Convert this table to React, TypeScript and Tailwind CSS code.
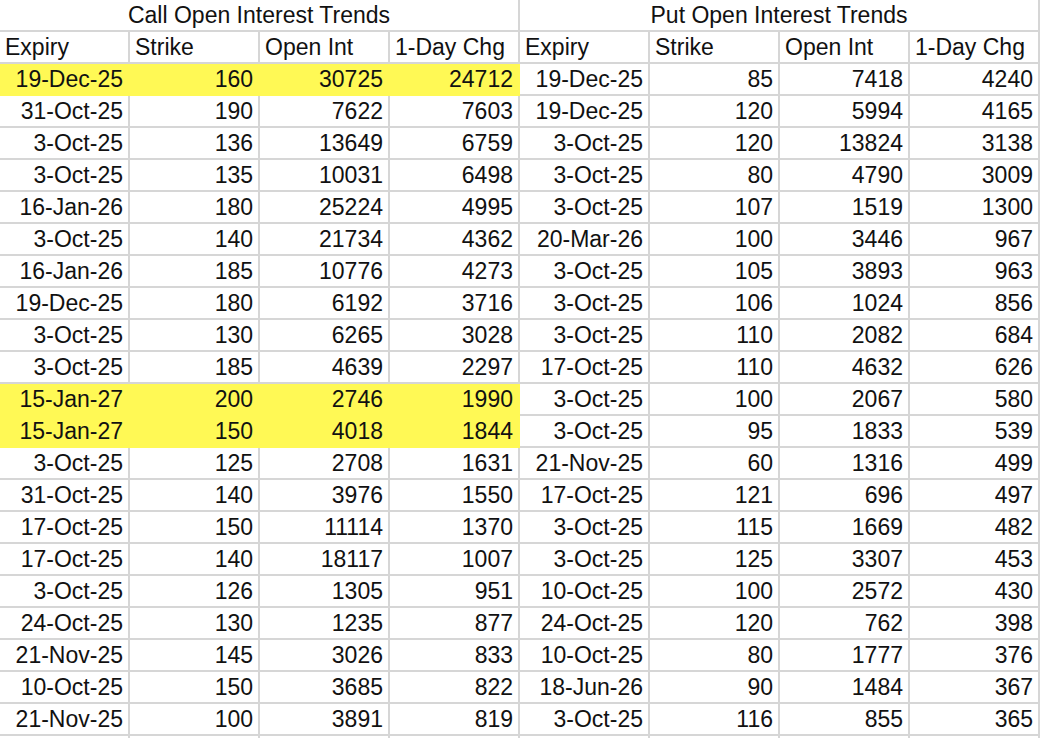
import React from 'react';

// --- DATA ---
type Row = [string, number, number, number, boolean?];

const CALLS: Row[] = [
    ["19-Dec-25", 160, 30725, 24712, true],
    ["31-Oct-25", 190, 7622, 7603],
    ["3-Oct-25", 136, 13649, 6759],
    ["3-Oct-25", 135, 10031, 6498],
    ["16-Jan-26", 180, 25224, 4995],
    ["3-Oct-25", 140, 21734, 4362],
    ["16-Jan-26", 185, 10776, 4273],
    ["19-Dec-25", 180, 6192, 3716],
    ["3-Oct-25", 130, 6265, 3028],
    ["3-Oct-25", 185, 4639, 2297],
    ["15-Jan-27", 200, 2746, 1990, true],
    ["15-Jan-27", 150, 4018, 1844, true],
    ["3-Oct-25", 125, 2708, 1631],
    ["31-Oct-25", 140, 3976, 1550],
    ["17-Oct-25", 150, 11114, 1370],
    ["17-Oct-25", 140, 18117, 1007],
    ["3-Oct-25", 126, 1305, 951],
    ["24-Oct-25", 130, 1235, 877],
    ["21-Nov-25", 145, 3026, 833],
    ["10-Oct-25", 150, 3685, 822],
    ["21-Nov-25", 100, 3891, 819],
];

const PUTS: Row[] = [
    ["19-Dec-25", 85, 7418, 4240],
    ["19-Dec-25", 120, 5994, 4165],
    ["3-Oct-25", 120, 13824, 3138],
    ["3-Oct-25", 80, 4790, 3009],
    ["3-Oct-25", 107, 1519, 1300],
    ["20-Mar-26", 100, 3446, 967],
    ["3-Oct-25", 105, 3893, 963],
    ["3-Oct-25", 106, 1024, 856],
    ["3-Oct-25", 110, 2082, 684],
    ["17-Oct-25", 110, 4632, 626],
    ["3-Oct-25", 100, 2067, 580],
    ["3-Oct-25", 95, 1833, 539],
    ["21-Nov-25", 60, 1316, 499],
    ["17-Oct-25", 121, 696, 497],
    ["3-Oct-25", 115, 1669, 482],
    ["3-Oct-25", 125, 3307, 453],
    ["10-Oct-25", 100, 2572, 430],
    ["24-Oct-25", 120, 762, 398],
    ["10-Oct-25", 80, 1777, 376],
    ["18-Jun-26", 90, 1484, 367],
    ["3-Oct-25", 116, 855, 365],
];

const HEADERS = ["Expiry", "Strike", "Open Int", "1-Day Chg"];

const Cell: React.FC<{ children?: React.ReactNode; left?: boolean; hl?: boolean }> = ({ children, left, hl }) => (
    <div
        className={
            "h-8 flex items-center pt-[1px] px-[5px] border-r-2 border-b-2 whitespace-nowrap " +
            (left ? "justify-start " : "justify-end ") +
            (hl ? "bg-[#fff955] border-[#fff955]" : "bg-white border-[#d6d6d6]")
        }
    >
        {children}
    </div>
);

export default function App() {
    return (
        <div
            className="w-[1040px] h-[738px] overflow-hidden bg-white text-[23px] text-[#111]"
            style={{ fontFamily: '"Liberation Sans", Arial, sans-serif' }}
        >
            <div className="grid grid-cols-[repeat(8,130px)]">
                {/* title row */}
                <div className="col-span-4 h-8 flex items-center justify-center border-r-2 border-b-2 border-[#d6d6d6]">
                    Call Open Interest Trends
                </div>
                <div className="col-span-4 h-8 flex items-center justify-center border-r-2 border-b-2 border-[#d6d6d6]">
                    Put Open Interest Trends
                </div>

                {/* header row */}
                {[...HEADERS, ...HEADERS].map((h, i) => (
                    <Cell key={i} left>{h}</Cell>
                ))}

                {/* data rows */}
                {CALLS.map((c, i) => {
                    const p = PUTS[i];
                    return (
                        <React.Fragment key={i}>
                            <Cell hl={c[4]}>{c[0]}</Cell>
                            <Cell hl={c[4]}>{c[1]}</Cell>
                            <Cell hl={c[4]}>{c[2]}</Cell>
                            <Cell hl={c[4]}>{c[3]}</Cell>
                            <Cell>{p[0]}</Cell>
                            <Cell>{p[1]}</Cell>
                            <Cell>{p[2]}</Cell>
                            <Cell>{p[3]}</Cell>
                        </React.Fragment>
                    );
                })}

                {/* next row, cut off by the window */}
                {Array.from({ length: 8 }).map((_, i) => (
                    <Cell key={"e" + i} />
                ))}
            </div>
        </div>
    );
}
